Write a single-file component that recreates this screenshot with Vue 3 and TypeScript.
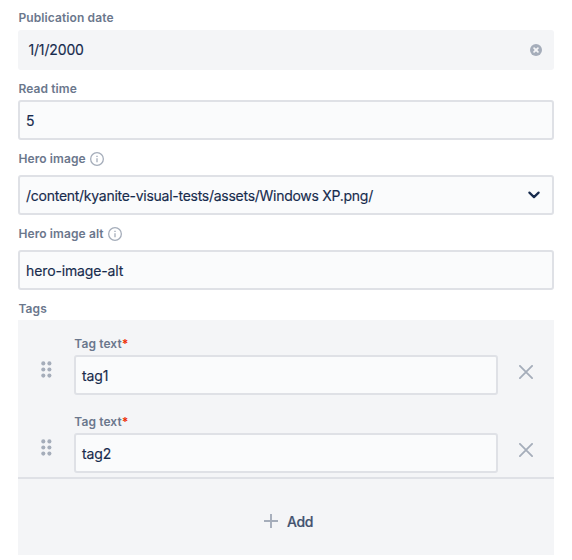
<script setup lang="ts">
import { ref } from 'vue'

interface Tag {
  id: number
  text: string
}

const publicationDate = ref('1/1/2000')
const readTime = ref('5')
const heroImage = ref('/content/kyanite-visual-tests/assets/Windows XP.png/')
const heroImageAlt = ref('hero-image-alt')
const tags = ref<Tag[]>([
  { id: 1, text: 'tag1' },
  { id: 2, text: 'tag2' },
])

function removeTag(id: number): void {
  tags.value = tags.value.filter((tag) => tag.id !== id)
}

function addTag(): void {
  tags.value.push({ id: Date.now(), text: '' })
}
</script>

<template>
  <form class="form" @submit.prevent>
    <section class="field">
      <div class="label date-label">Publication date</div>
      <div class="control date">
        <span class="value">{{ publicationDate }}</span>
        <svg class="clear" viewBox="0 0 12 12" @click="publicationDate = ''">
          <circle cx="6" cy="6" r="6" fill="#a5adba" />
          <path d="M4.1 4.1l3.8 3.8M7.9 4.1l-3.8 3.8" stroke="#f4f5f7" stroke-width="1.8" stroke-linecap="round" />
        </svg>
      </div>
    </section>

    <section class="field">
      <div class="label">Read time</div>
      <div class="control"><span class="value">{{ readTime }}</span></div>
    </section>

    <section class="field described">
      <div class="label">
        <span>Hero image</span>
        <svg class="info" viewBox="0 0 14 14" fill="none" stroke="#a5adba">
          <circle cx="7" cy="7" r="6.35" stroke-width="1.3" />
          <path d="M7 6.2v4" stroke-width="1.3" />
          <path d="M7 3.7v1.3" stroke-width="1.4" />
        </svg>
      </div>
      <div class="control">
        <span class="value path">{{ heroImage }}</span>
        <svg class="chevron" viewBox="0 0 12 8">
          <path d="M1.4 1.6L6 6.1l4.6-4.5" fill="none" stroke="#172b4d" stroke-width="2.2" stroke-linecap="round" stroke-linejoin="round" />
        </svg>
      </div>
    </section>

    <section class="field described">
      <div class="label">
        <span>Hero image alt</span>
        <svg class="info" viewBox="0 0 14 14" fill="none" stroke="#a5adba">
          <circle cx="7" cy="7" r="6.35" stroke-width="1.3" />
          <path d="M7 6.2v4" stroke-width="1.3" />
          <path d="M7 3.7v1.3" stroke-width="1.4" />
        </svg>
      </div>
      <div class="control"><span class="value">{{ heroImageAlt }}</span></div>
    </section>

    <section class="field">
      <div class="label">Tags</div>
      <div class="tags">
        <div class="items">
          <div v-for="tag in tags" :key="tag.id" class="item">
            <svg class="grip" viewBox="0 0 11 17" fill="#a5adba">
              <circle cx="2.3" cy="2.4" r="2.05" /><circle cx="8.4" cy="2.4" r="2.05" />
              <circle cx="2.3" cy="8.5" r="2.05" /><circle cx="8.4" cy="8.5" r="2.05" />
              <circle cx="2.3" cy="14.6" r="2.05" /><circle cx="8.4" cy="14.6" r="2.05" />
            </svg>
            <div class="item-field">
              <div class="label">Tag text<span class="required">*</span></div>
              <div class="control"><span class="value">{{ tag.text }}</span></div>
            </div>
            <svg class="remove" viewBox="0 0 14 14" @click="removeTag(tag.id)">
              <path d="M.9.9l12.2 12.2M13.1.9L.9 13.1" stroke="#a5adba" stroke-width="1.8" stroke-linecap="round" />
            </svg>
          </div>
        </div>
        <div class="add" @click="addTag">
          <svg class="plus" viewBox="0 0 14 14">
            <path d="M7 0v14M0 7h14" stroke="#a5adba" stroke-width="1.9" />
          </svg>
          <span class="add-text">Add</span>
        </div>
      </div>
    </section>
  </form>
</template>

<style>
body {
  margin: 0;
  background: #fff;
}
</style>

<style scoped>
.form {
  box-sizing: border-box;
  width: 572px;
  height: 560px;
  padding: 10px 18.4px 0;
  overflow: hidden;
  display: flex;
  flex-direction: column;
  gap: 11px;
  font-family: Inter, "Liberation Sans", sans-serif;
  color: #172b4d;
}
.label {
  display: flex;
  align-items: center;
  height: 16px;
  margin-bottom: 3px;
  font-size: 12px;
  font-weight: 600;
  line-height: 16px;
  letter-spacing: 0.11px;
  color: #6b778c;
  white-space: pre;
}
.date-label {
  margin-bottom: 4px;
}
.described .label {
  margin-bottom: 8px;
}
.info {
  width: 14px;
  height: 14px;
  margin-left: 4.5px;
}
.control {
  box-sizing: border-box;
  display: flex;
  align-items: center;
  justify-content: space-between;
  height: 40px;
  padding: 0 12px 0 5.7px;
  border: 2px solid #dfe1e6;
  border-radius: 3px;
  background: #fafbfc;
  font-size: 14px;
  line-height: 20px;
  letter-spacing: -0.14px;
}
.value {
  padding-top: 1px;
  -webkit-text-stroke: 0.15px #172b4d;
}
.value.path {
  letter-spacing: -0.27px;
}
.control.date {
  border-color: #f4f5f7;
  background: #f4f5f7;
  padding: 0 10px 0 8px;
}
.date .value {
  padding-top: 0;
}
.clear {
  width: 12px;
  height: 12px;
}
.chevron {
  width: 12px;
  height: 8px;
}
.tags {
  height: 235px;
  background: #f4f5f7;
}
.items {
  display: flex;
  flex-direction: column;
  gap: 19px;
  padding: 16px 21px 4px 22.3px;
  border-bottom: 2px solid #dfe1e6;
}
.item {
  display: flex;
  align-items: center;
}
.item-field {
  flex: 1;
  margin: 0 21px 0 22.6px;
}
.grip {
  width: 11px;
  height: 17px;
  margin-top: 8px;
}
.remove {
  width: 14px;
  height: 14px;
  margin-top: 13px;
}
.required {
  color: #ee2f05;
  font-weight: 700;
}
.add {
  display: flex;
  align-items: center;
  justify-content: center;
  gap: 9px;
  height: 84px;
  padding-left: 5px;
  font-size: 14px;
  font-weight: 500;
  letter-spacing: -0.3px;
  color: #42526e;
}
.add-text {
  -webkit-text-stroke: 0.2px #42526e;
}
.plus {
  width: 14px;
  height: 14px;
}
</style>
